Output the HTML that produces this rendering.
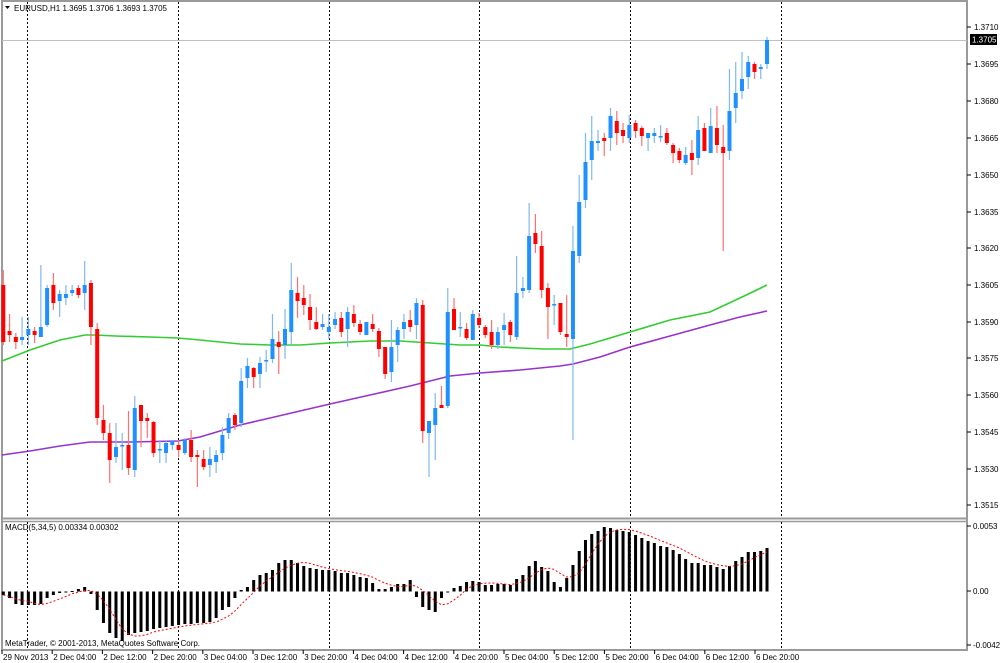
<!DOCTYPE html>
<html><head><meta charset="utf-8">
<style>
html,body{margin:0;padding:0;background:#fff;width:1000px;height:663px;overflow:hidden}
svg{display:block}
text{font-family:"Liberation Sans",sans-serif;font-size:8px;fill:#000}
</style></head>
<body>
<svg id="s" width="1000" height="663" xmlns="http://www.w3.org/2000/svg">
<rect x="0" y="0" width="1000" height="663" fill="#fff"/>
<g id="grid"></g>
<g id="ma"></g>
<g id="cd"></g>
<g id="mc"></g>
<g id="ax"></g>
<text x="14" y="11">EURUSD,H1  1.3695 1.3706 1.3693 1.3705</text>
<path d="M5,6 L10,6 L7.5,9 Z" fill="#000"/>
<text x="5" y="530">MACD(5,34,5) 0.00334 0.00302</text>
<text x="5" y="646">MetaTrader, © 2001-2013, MetaQuotes Software Corp.</text>
</svg>
<script>
var S='http://www.w3.org/2000/svg';
function el(p,t,a){var e=document.createElementNS(S,t);for(var k in a)e.setAttribute(k,a[k]);document.getElementById(p).appendChild(e);return e;}
el('grid','rect',{x:2,y:1,width:965,height:649,fill:'none',stroke:'#9a9a9a','stroke-width':2});
el('grid','line',{x1:2,y1:518.5,x2:967,y2:518.5,stroke:'#9a9a9a','stroke-width':2});
el('grid','line',{x1:2,y1:521.5,x2:967,y2:521.5,stroke:'#9a9a9a','stroke-width':1.5});
[27,178,329,479,630,781].forEach(function(x){
 el('grid','line',{x1:x+.5,y1:2,x2:x+.5,y2:518,stroke:'#000','stroke-dasharray':'2,2','stroke-width':1});
 el('grid','line',{x1:x+.5,y1:522,x2:x+.5,y2:650,stroke:'#000','stroke-dasharray':'2,2','stroke-width':1});
});
el('grid','line',{x1:2,y1:40.5,x2:967,y2:40.5,stroke:'#c0c0c0','stroke-width':1});
var g=[[2,361],[30,350],[60,340],[85,335],[95,335],[115,336],[150,337],[178,338],[200,340],[240,344],[270,345],[300,345],[330,343],[370,341],[400,341],[430,343],[460,345],[480,345],[500,347],[520,348],[545,349],[570,349],[590,344],[630,332],[670,320],[710,312],[740,298],[767,285]];
var p=[[2,455],[30,451],[60,446],[90,442],[100,442],[130,442],[178,441],[200,437],[240,425],[270,418],[300,411],[330,404],[370,395],[410,386],[430,381],[450,376],[480,373],[520,370],[560,366],[573,364],[600,357],[630,347],[670,336],[710,325],[740,317],[767,311]];
el('ma','polyline',{points:g.join(' '),fill:'none',stroke:'#32cd32','stroke-width':1.6});
el('ma','polyline',{points:p.join(' '),fill:'none',stroke:'#9932cc','stroke-width':1.6});
var C=[[285,342,270,345],[331,335,314,342],[337,342,333,349],[340,337,317,345],[335,329,317,345],[331,335,327,343],[337,327,265,337],[325,288,285,327],[285,303,273,310],[301,294,290,317],[298,294,285,305],[293,290,285,296],[288,295,285,298],[293,285,261,310],[283,327,280,345],[329,418,323,425],[420,433,405,440],[433,460,423,483],[457,447,423,463],[446,445,433,470],[445,468,411,475],[470,408,396,477],[405,421,405,447],[418,421,413,438],[422,453,421,457],[450,449,440,463],[453,443,440,463],[445,441,440,450],[445,450,440,457],[453,440,438,455],[440,457,430,462],[455,457,450,487],[459,467,450,470],[465,459,447,477],[462,455,450,473],[453,435,427,460],[433,418,413,439],[415,425,413,430],[423,381,368,427],[378,366,358,388],
[368,377,367,388],[374,363,357,388],[361,360,350,372],[359,339,314,363],[342,347,331,374],[345,329,309,359],[332,290,263,345],[293,301,277,318],[298,305,285,315],[307,320,294,330],[322,329,307,330],[327,324,314,330],[332,327,314,339],[325,319,312,329],[318,332,312,337],[329,312,307,347],[314,323,305,327],[324,332,320,335],[335,322,322,335],[324,329,314,332],[331,349,328,357],[347,374,347,379],[372,347,320,382],[345,330,327,362],[329,322,314,339],[320,327,310,332],[325,303,298,339],[305,431,300,443],[433,421,421,477],[425,408,393,460],[405,408,386,408],[406,312,288,408],[309,330,298,330],[327,327,312,337],[329,338,323,340],[340,314,310,340],[318,325,313,328],[327,335,325,338],[332,345,320,349],[345,332,327,349],[330,325,313,345],[322,335,320,342],[337,293,256,340],[291,288,277,298],[290,236,203,293],[233,244,214,253],[246,290,231,298],[288,307,283,339],[305,304,295,325],[303,332,303,335],[334,337,295,347],[339,251,226,440],[256,202,175,263],[200,162,133,208],[160,141,116,180],[143,141,130,151],[138,141,133,156],[138,116,108,151],[121,133,111,145],[130,136,123,143],[138,125,115,143],[123,131,120,138],[128,136,126,146],[138,133,133,151],[136,133,128,143],[136,136,125,142],[133,143,128,145],[145,153,143,163],[151,160,148,163],[163,155,147,165],[153,160,140,175],[158,130,116,165],[128,151,123,151],[153,126,108,153],[128,145,106,153],[147,153,125,251],[151,111,69,160],[108,93,62,123],[91,79,52,99],[77,62,56,89],[64,72,62,79],[69,67,64,79],[64,40,37,69]];
function X(i){return 3.3+6.26*i;}
C.forEach(function(c,i){
 var x=X(i),bull=c[1]<=c[0],col=bull?'#1e90ff':'#ff0000';
 var top=Math.min(c[0],c[1]),bot=Math.max(c[0],c[1]);
 el('cd','line',{x1:x,y1:c[2],x2:x,y2:c[3],stroke:bull?'#7fb8f5':'#ff7070','stroke-width':1.2});
 el('cd','rect',{x:x-2,y:top,width:4,height:Math.max(1.5,bot-top),fill:col});
});
var M=[595,598,604,605,605,605,604,598,595,593,592,591,589,587,594,610,623,633,638,641,635,633,632,631,629,628,627,626,625,624,624,623,623,622,618,610,607,598,590,587,580,575,573,570,563,560,560,563,566,568,569,570,570,571,573,573,575,577,578,583,589,589,587,584,584,580,597,607,610,612,598,592,588,586,582,581,582,585,585,584,584,585,579,575,566,561,567,571,582,587,578,565,551,540,534,531,527,528,530,531,532,535,538,541,543,546,547,550,554,559,563,563,565,565,567,569,566,561,557,552,552,551,548];
var Z=591.5,sig=[];
M.forEach(function(v,i){
 var x=X(i);
 el('mc','rect',{x:x-1.5,y:Math.min(v,Z),width:3,height:Math.max(1,Math.abs(v-Z)),fill:'#000'});
 var s=0,n=0;for(var k=Math.max(0,i-4);k<=i;k++){s+=M[k];n++;}
 sig.push(x.toFixed(1)+','+(s/n).toFixed(1));
});
el('mc','polyline',{points:sig.join(' '),fill:'none',stroke:'#ff0000','stroke-width':1,'stroke-dasharray':'2,2'});
var P=[['1.3710',27],['1.3695',64],['1.3680',101],['1.3665',138],['1.3650',175],['1.3635',212],['1.3620',248],['1.3605',285],['1.3590',322],['1.3575',358],['1.3560',395],['1.3545',432],['1.3530',469],['1.3515',505]];
P.forEach(function(a){el('ax','line',{x1:967,y1:a[1],x2:971,y2:a[1],stroke:'#000'});var t=el('ax','text',{x:974,y:a[1]+3});t.textContent=a[0];});
el('ax','rect',{x:970,y:34,width:27,height:11,fill:'#000'});
var t=el('ax','text',{x:972,y:42.5,style:'fill:#fff'});t.textContent='1.3705';
[['0.0053',526],['0.00',591],['-0.00427',645]].forEach(function(a){el('ax','line',{x1:967,y1:a[1],x2:971,y2:a[1],stroke:'#000'});var t=el('ax','text',{x:973,y:a[1]+3});t.textContent=a[0];});
var T=['29 Nov 2013','2 Dec 04:00','2 Dec 12:00','2 Dec 20:00','3 Dec 04:00','3 Dec 12:00','3 Dec 20:00','4 Dec 04:00','4 Dec 12:00','4 Dec 20:00','5 Dec 04:00','5 Dec 12:00','5 Dec 20:00','6 Dec 04:00','6 Dec 12:00','6 Dec 20:00'];
T.forEach(function(s,i){var x=2+i*50.2;el('ax','line',{x1:x,y1:650,x2:x,y2:654,stroke:'#000'});var t=el('ax','text',{x:x+1,y:660});t.textContent=s;});
</script>
</body></html>
